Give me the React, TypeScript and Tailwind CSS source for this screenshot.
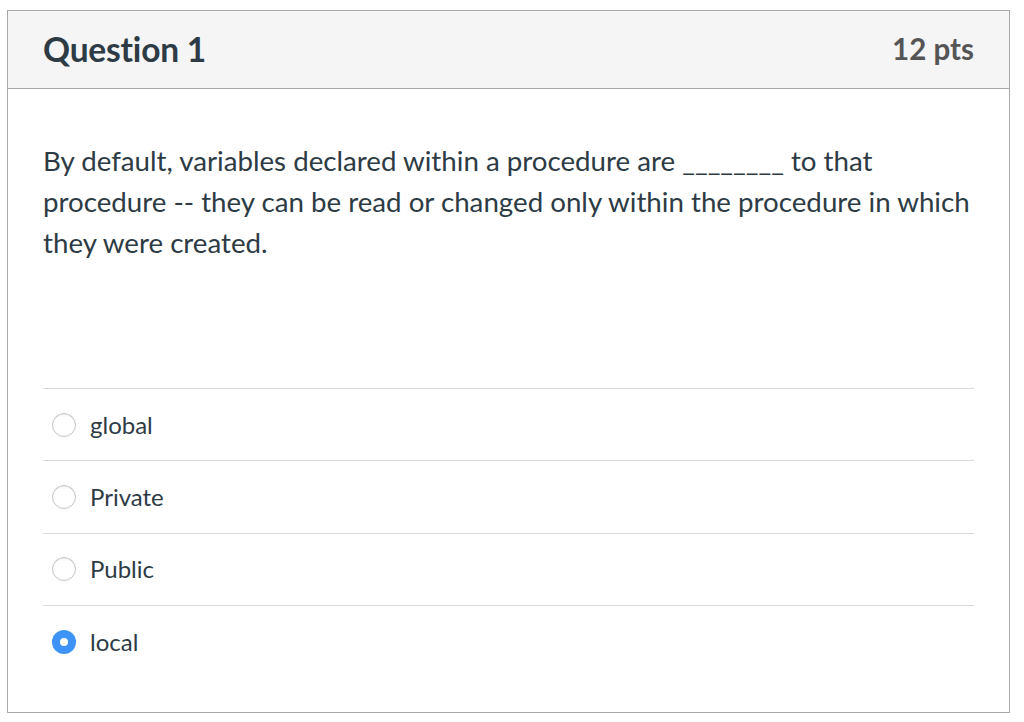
import React from "react";

const answers = [
  { label: "global", checked: false },
  { label: "Private", checked: false },
  { label: "Public", checked: false },
  { label: "local", checked: true },
];

function Radio({ checked }: { checked: boolean }) {
  if (checked) {
    return (
      <span className="flex h-[24px] w-[24px] items-center justify-center rounded-full bg-[#3d94f6]">
        <span className="h-[8px] w-[8px] rounded-full bg-white" />
      </span>
    );
  }
  return (
    <span className="block h-[24px] w-[24px] rounded-full border border-[#c4c4c4] bg-white shadow-[inset_0_1px_2px_rgba(0,0,0,0.08)]" />
  );
}

export default function App() {
  return (
    <div className="min-h-[722px] bg-white pl-[7px] pt-[10px] font-['Lato','Noto_Sans',sans-serif] text-[#2d3b45]">
      <div className="flex h-[703px] w-[1003px] flex-col border border-[#a9a9a9]">
        <div className="flex h-[78px] items-center justify-between border-b border-[#a9a9a9] bg-[#f5f5f5] pl-[35px] pr-[35px]">
          <h2 className="text-[33.5px] font-bold tracking-[-0.2px]">Question 1</h2>
          <span className="text-[29.5px] font-bold text-[#555555]">12 pts</span>
        </div>
        <div className="px-[35px] pt-[51px]">
          <p className="text-[27.7px] leading-[41px]">
            By default, variables declared within a procedure are ________ to that procedure -- they can be read or
            changed only within the procedure in which they were created.
          </p>
          <div className="mt-[125px]">
            {answers.map((a) => (
              <div key={a.label} className="flex h-[72.3px] items-center border-t border-[#d9d9d9] pl-[9px]">
                <Radio checked={a.checked} />
                <span className="ml-[14px] text-[24px]">{a.label}</span>
              </div>
            ))}
          </div>
        </div>
      </div>
    </div>
  );
}
